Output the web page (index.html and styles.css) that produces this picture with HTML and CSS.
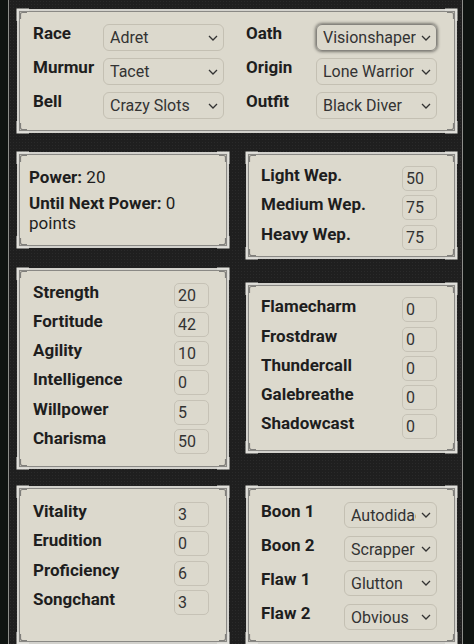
FILE: index.html
```html
<!DOCTYPE html>
<html lang="en">
<head>
  <meta charset="UTF-8">
  <title>Character Sheet</title>
  <link rel="stylesheet" href="styles.css">
</head>
<body>
  <div class="sheet">
    <div class="panel top">
      <div class="half">
        <label>Race</label>
        <select><option>Adret</option></select>
        <label>Murmur</label>
        <select><option>Tacet</option></select>
        <label>Bell</label>
        <select><option>Crazy Slots</option></select>
      </div>
      <div class="half">
        <label>Oath</label>
        <select class="focused"><option>Visionshaper</option></select>
        <label>Origin</label>
        <select><option>Lone Warrior</option></select>
        <label>Outfit</label>
        <select><option>Black Diver</option></select>
      </div>
    </div>

    <div class="row row-start">
      <div class="panel power">
        <p><b>Power:</b> 20</p>
        <p><b>Until Next Power:</b> 0 points</p>
      </div>
      <div class="panel right weapons">
        <div class="fields">
          <label>Light Wep.</label><input type="number" value="50">
          <label>Medium Wep.</label><input type="number" value="75">
          <label>Heavy Wep.</label><input type="number" value="75">
        </div>
      </div>
    </div>

    <div class="row row-center">
      <div class="panel left stats">
        <div class="fields">
          <label>Strength</label><input type="number" value="20">
          <label>Fortitude</label><input type="number" value="42">
          <label>Agility</label><input type="number" value="10">
          <label>Intelligence</label><input type="number" value="0">
          <label>Willpower</label><input type="number" value="5">
          <label>Charisma</label><input type="number" value="50">
        </div>
      </div>
      <div class="panel right attunements">
        <div class="fields">
          <label>Flamecharm</label><input type="number" value="0">
          <label>Frostdraw</label><input type="number" value="0">
          <label>Thundercall</label><input type="number" value="0">
          <label>Galebreathe</label><input type="number" value="0">
          <label>Shadowcast</label><input type="number" value="0">
        </div>
      </div>
    </div>

    <div class="row row-last">
      <div class="panel left">
        <div class="fields">
          <label>Vitality</label><input type="number" value="3">
          <label>Erudition</label><input type="number" value="0">
          <label>Proficiency</label><input type="number" value="6">
          <label>Songchant</label><input type="number" value="3">
        </div>
      </div>
      <div class="panel right traits">
        <div class="fields picks">
          <label>Boon 1</label>
          <select><option>Autodidact</option></select>
          <label>Boon 2</label>
          <select><option>Scrapper</option></select>
          <label>Flaw 1</label>
          <select><option>Glutton</option></select>
          <label>Flaw 2</label>
          <select><option>Obvious</option></select>
        </div>
      </div>
    </div>
  </div>
</body>
</html>
```

FILE: styles.css
```css
body {
  margin: 0;
  background: #0f1411;
  font-family: Roboto, "Liberation Sans", sans-serif;
  color: #1e1e1e;
}
.sheet {
  margin-left: 8px;
  width: 455px;
  min-height: 100vh;
  box-sizing: border-box;
  padding: 9px 5px 0 8px;
  border-left: 1px solid #8d8e8a;
  border-right: 1px solid #8d8e8a;
  background-color: #1f1f1f;
  background-image: radial-gradient(rgba(255,255,255,0.05) 1px, transparent 1px);
  background-size: 3px 3px;
}
.panel {
  position: relative;
  background: #dcd9cd;
  border: 2px solid #d2d1cc;
  box-shadow: inset 0 0 0 1px #8a8985;
}
.panel::before {
  content: "";
  position: absolute;
  top: -3px;
  left: -3px;
  right: -3px;
  bottom: -3px;
  pointer-events: none;
  background:
    url("data:image/svg+xml,%3Csvg xmlns='http://www.w3.org/2000/svg' width='14' height='14'%3E%3Cpath d='M1.5 13V1.5H13' fill='none' stroke='%23e2e1dc' stroke-width='2'/%3E%3Cpath d='M4.5 11V6.5Q4.5 4.5 6.5 4.5H11' fill='none' stroke='%23807f7b' stroke-width='1.2'/%3E%3C/svg%3E") left top no-repeat,
    url("data:image/svg+xml,%3Csvg xmlns='http://www.w3.org/2000/svg' width='14' height='14'%3E%3Cg transform='rotate(90 7 7)'%3E%3Cpath d='M1.5 13V1.5H13' fill='none' stroke='%23e2e1dc' stroke-width='2'/%3E%3Cpath d='M4.5 11V6.5Q4.5 4.5 6.5 4.5H11' fill='none' stroke='%23807f7b' stroke-width='1.2'/%3E%3C/g%3E%3C/svg%3E") right top no-repeat,
    url("data:image/svg+xml,%3Csvg xmlns='http://www.w3.org/2000/svg' width='14' height='14'%3E%3Cg transform='rotate(180 7 7)'%3E%3Cpath d='M1.5 13V1.5H13' fill='none' stroke='%23e2e1dc' stroke-width='2'/%3E%3Cpath d='M4.5 11V6.5Q4.5 4.5 6.5 4.5H11' fill='none' stroke='%23807f7b' stroke-width='1.2'/%3E%3C/g%3E%3C/svg%3E") right bottom no-repeat,
    url("data:image/svg+xml,%3Csvg xmlns='http://www.w3.org/2000/svg' width='14' height='14'%3E%3Cg transform='rotate(270 7 7)'%3E%3Cpath d='M1.5 13V1.5H13' fill='none' stroke='%23e2e1dc' stroke-width='2'/%3E%3Cpath d='M4.5 11V6.5Q4.5 4.5 6.5 4.5H11' fill='none' stroke='%23807f7b' stroke-width='1.2'/%3E%3C/g%3E%3C/svg%3E") left bottom no-repeat;
}
label {
  font-size: 17px;
  font-weight: bold;
  line-height: 18px;
}
select {
  -webkit-appearance: none;
  appearance: none;
  box-sizing: border-box;
  height: 27px;
  padding: 0 20px 0 6px;
  border: 1px solid #c4c0b3;
  border-radius: 6px;
  background: transparent url("data:image/svg+xml,%3Csvg xmlns='http://www.w3.org/2000/svg' width='10' height='6'%3E%3Cpath d='M1 1l4 4 4-4' fill='none' stroke='%23333' stroke-width='1.3'/%3E%3C/svg%3E") no-repeat right 5px center;
  font-family: Roboto, "Liberation Sans", sans-serif;
  font-size: 16px;
  color: #333;
  outline: none;
}
select.focused {
  border-color: #86847e;
  box-shadow: 0 0 3px 1px rgba(0,0,0,0.45);
}
input {
  box-sizing: border-box;
  width: 35px;
  height: 25px;
  padding: 0 3px;
  border: 1px solid #c6c2b6;
  border-radius: 5px;
  background: transparent;
  font-family: Roboto, "Liberation Sans", sans-serif;
  font-size: 16px;
  color: #333;
  -moz-appearance: textfield;
}
input::-webkit-inner-spin-button,
input::-webkit-outer-spin-button {
  -webkit-appearance: none;
  margin: 0;
}

.top {
  display: flex;
  justify-content: space-between;
  padding: 13px 18px 12px 14px;
}
.half {
  display: grid;
  grid-template-columns: 70px 121px;
  row-gap: 7px;
  align-items: start;
}

.row {
  display: grid;
  grid-template-columns: 212px 211px;
  column-gap: 17px;
}
.row-start {
  margin-top: 19px;
  align-items: start;
}
.row-center {
  margin-top: 9px;
  align-items: center;
}
.row-last {
  margin-top: 17px;
  align-items: stretch;
}

.power {
  padding: 13px 10px 13px 10px;
}
.power p {
  margin: 0 0 5.5px;
  font-size: 17px;
}
.power p:last-child {
  margin-bottom: 0;
}
.power b {
  font-weight: bold;
}

.fields {
  display: grid;
  grid-template-columns: 1fr 35px;
  row-gap: 4.3px;
  align-items: start;
}
.left {
  padding: 13px 18px 13px 14px;
}
.row-last .left {
  padding-top: 14px;
}
.right {
  padding: 12px 18px 12px 13px;
}
.weapons {
  padding-bottom: 7px;
}
.traits {
  padding-top: 14px;
}
.picks {
  grid-template-columns: 1fr 93px;
  row-gap: 8px;
}
.picks select {
  height: 26px;
}
```
